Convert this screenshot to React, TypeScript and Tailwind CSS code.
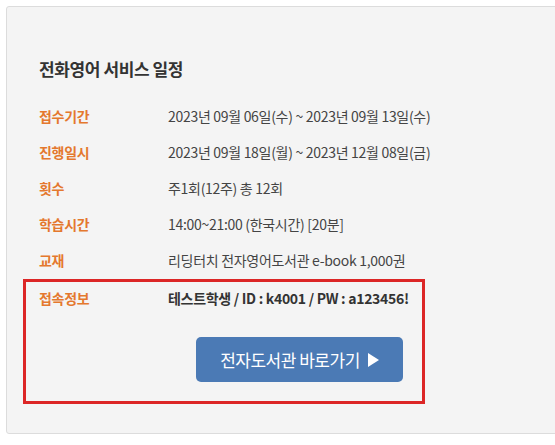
import React from "react";

const rows: [string, string][] = [
  ["접수기간", "2023년 09월 06일(수) ~ 2023년 09월 13일(수)"],
  ["진행일시", "2023년 09월 18일(월) ~ 2023년 12월 08일(금)"],
  ["횟수", "주1회(12주) 총 12회"],
  ["학습시간", "14:00~21:00 (한국시간) [20분]"],
  ["교재", "리딩터치 전자영어도서관 e-book 1,000권"],
];

export default function App() {
  return (
    <div
      className="w-[555px] h-[445px] overflow-hidden bg-white pt-[6px] pl-[6px]"
      style={{ fontFamily: '"Noto Sans CJK KR", "Noto Sans", sans-serif' }}
    >
      <div className="w-[620px] h-[428px] rounded-[3px] border border-[#dcdcdc] bg-[#f4f4f4] pt-[50px]">
        <h2 className="pl-[32px] text-[17px] leading-[24px] font-bold text-[#333] tracking-[-0.4px]">
          전화영어 서비스 일정
        </h2>
        <div className="mt-[17px]">
          {rows.map(([k, v]) => (
            <div key={k} className="flex h-[36px] items-center pl-[32px] text-[14px] tracking-[-0.3px]">
              <div className="w-[129px] font-bold text-[#e4782e]">{k}</div>
              <div className="text-[#444]">{v}</div>
            </div>
          ))}
        </div>
        <div className="ml-[16px] mt-[1px] w-[402px] h-[125px] border-[3px] border-[#dc2626] pl-[13px]">
          <div className="flex h-[27px] items-end text-[14px] tracking-[-0.3px]">
            <div className="w-[129px] font-bold text-[#e4782e]">접속정보</div>
            <div className="font-bold text-[#333]">테스트학생 / ID : k4001 / PW : a123456!</div>
          </div>
          <div className="pl-[157px] mt-[28px]">
            <button className="flex h-[45px] w-[207px] items-center justify-center gap-[8px] rounded-[5px] bg-[#4b7ab5] text-[17px] text-white tracking-[-0.5px]">
              <span>전자도서관 바로가기</span>
              <svg width="11" height="14" viewBox="0 0 11 14"><path d="M0 0L11 7L0 14Z" fill="white" /></svg>
            </button>
          </div>
        </div>
      </div>
    </div>
  );
}
